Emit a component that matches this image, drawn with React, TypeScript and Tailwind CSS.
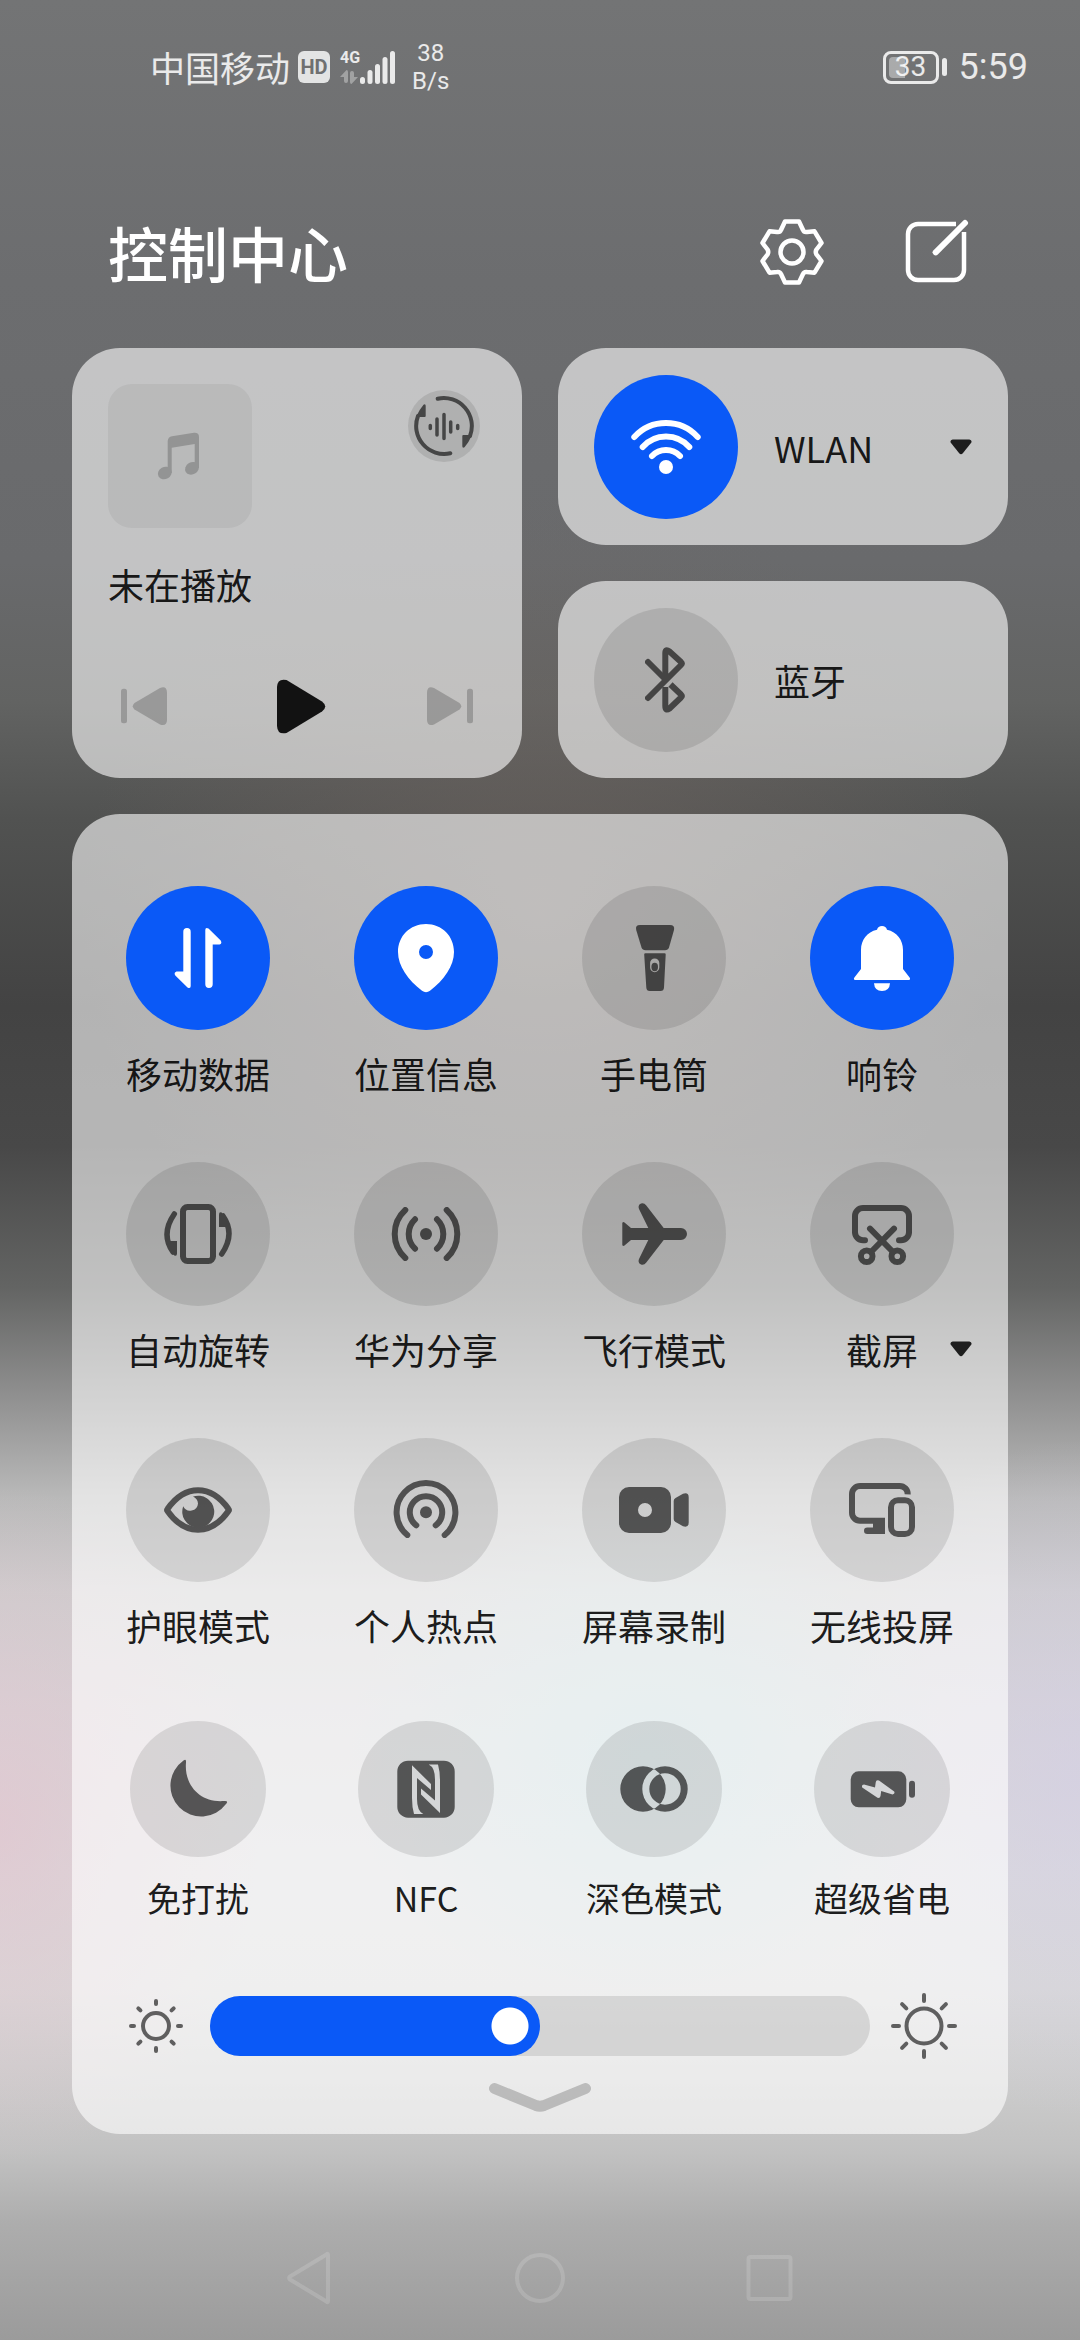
import React, {useState} from 'react'
import clsx from 'clsx'

type Tile = {
  id: string
  label: string
  icon: React.ReactNode
  hasMenu?: boolean
}

const stroke = {
  fill: 'none',
  stroke: 'currentColor',
  strokeWidth: 6,
  strokeLinecap: 'round' as const,
  strokeLinejoin: 'round' as const,
}

// every glyph is drawn on the same 72px board, centered at 36,36
function Icon({children, className}: {children: React.ReactNode; className?: string}) {
  return (
    <svg
      viewBox="0 0 72 72"
      fill="currentColor"
      aria-hidden="true"
      className={clsx('size-[72px] shrink-0', className)}
    >
      {children}
    </svg>
  )
}

const wifi = (
  <Icon>
    <g {...stroke}>
      <path d="M4.3 26a43 43 0 0 1 63.4 0" />
      <path d="M12.7 36a31 31 0 0 1 46.6 0" />
      <path d="M22 45a19.3 19.3 0 0 1 28 0" />
    </g>
    <circle cx="36" cy="56" r="7" />
  </Icon>
)

const bluetooth = (
  <Icon>
    <g {...stroke}>
      <path d="M18 18L35 35" />
      <path d="M18 54L51 21Q52.5 19.5 51 18L39.5 7.5Q35.3 4.5 35.3 9V35" />
      <path
        strokeLinecap="butt"
        d="M35.3 43V62Q35.3 67.5 39.5 64.5L51 53.5Q52.5 52 51 50.5L40.5 40.5"
      />
    </g>
  </Icon>
)

const dataArrow =
  'M21.3 9.7a3.7 3.7 0 0 1 7.4 0V64q0 3-3.2 1.5L13.3 53.5q-1.8-3 1.2-4H21.3z'

const tiles: Tile[] = [
  {
    id: 'data',
    label: '移动数据',
    icon: (
      <Icon>
        <path d={dataArrow} />
        <path d={dataArrow} transform="rotate(180 36 36)" />
      </Icon>
    ),
  },
  {
    id: 'location',
    label: '位置信息',
    icon: (
      <Icon>
        <path
          fillRule="evenodd"
          d="M36 2C20 2 8 14 8 30C8 44 18 58 32 68.8Q36 71.5 40 68.8C54 58 64 44 64 30C64 14 52 2 36 2zM29 30a7 7 0 1 0 14 0a7 7 0 1 0-14 0z"
        />
      </Icon>
    ),
  },
  {
    id: 'torch',
    label: '手电筒',
    icon: (
      <Icon>
        <path d="M22 3H52Q57 3 56 8L51 25.5Q50 28.3 47 28.3H27.5Q24.5 28.3 23.5 25.5L18.2 8Q17 3 22 3z" />
        <path
          fillRule="evenodd"
          d="M27.5 31.3H46.5Q47.8 31.3 47.7 32.6L46 65.5Q45.8 69 42.5 69H31.8Q28.5 69 28.3 65.5L26.2 32.6Q26.1 31.3 27.5 31.3zM32.1 41v4.6a4.6 4.6 0 0 0 9.2 0V41a4.6 4.6 0 0 0-9.2 0z"
        />
        <ellipse cx="36.7" cy="45" rx="3.3" ry="4.2" />
      </Icon>
    ),
  },
  {
    id: 'ring',
    label: '响铃',
    icon: (
      <Icon>
        <path d="M31 7.8a5.2 5.2 0 0 1 10 0C51 10 57 18 57 28V47L63.6 55.5Q65 58 62.5 58H9.5Q7 58 8.4 55.5L15 47V28C15 18 21 10 31 7.8z" />
        <path d="M28 61.3H44Q43.5 69 36 69T28 61.3z" />
      </Icon>
    ),
  },
  {
    id: 'rotate',
    label: '自动旋转',
    icon: (
      <Icon>
        <rect x="21" y="9" width="30" height="54" rx="4.5" {...stroke} />
        <path d="M12.3 16Q-1.6 36 11 54" {...stroke} strokeWidth={5.5} />
        <path d="M8 43H15V55.5Q15 58.5 12.3 57.5L7 50z" />
        <path d="M59.7 56Q73.6 36 61 18" {...stroke} strokeWidth={5.5} />
        <path d="M64 29H57V16.5Q57 13.5 59.7 14.5L65 22z" />
      </Icon>
    ),
  },
  {
    id: 'share',
    label: '华为分享',
    icon: (
      <Icon>
        <circle cx="36" cy="36" r="6" />
        <g {...stroke}>
          <path d="M25 21.3a20.3 20.3 0 0 0 0 29.4" />
          <path d="M15.3 12a32.5 32.5 0 0 0 0 48" />
          <path d="M47 21.3a20.3 20.3 0 0 1 0 29.4" />
          <path d="M56.7 12a32.5 32.5 0 0 1 0 48" />
        </g>
      </Icon>
    ),
  },
  {
    id: 'airplane',
    label: '飞行模式',
    icon: (
      <Icon>
        <path d="M4.3 25Q5 23.5 6.5 24.5L13 30H30.3L21 11Q19.5 7 23 5.5Q26 4.5 28.3 7.5L45.7 30H63a6 6 0 0 1 0 12H45.7L28.3 64.5Q26 67.5 23 66.5Q19.5 65 21 61L30.3 42H13L6.5 47.5Q5 48.5 4.3 47z" />
      </Icon>
    ),
  },
  {
    id: 'screenshot',
    label: '截屏',
    hasMenu: true,
    icon: (
      <Icon>
        <g {...stroke}>
          <path d="M19 42.3H17a8 8 0 0 1-8-8V18a8 8 0 0 1 8-8H55a8 8 0 0 1 8 8V34.3a8 8 0 0 1-8 8H53" />
          <path d="M24 30.7L47 54M48 30.7L25 54" />
          <circle cx="20.7" cy="58.3" r="5.8" />
          <circle cx="51.3" cy="58.3" r="5.8" />
        </g>
      </Icon>
    ),
  },
  {
    id: 'eye',
    label: '护眼模式',
    icon: (
      <Icon>
        <path
          {...stroke}
          d="M5.5 35C14 23 24 16.3 36 16.3S58 23 66.5 35q.8 1 0 2C58 49 48 55.7 36 55.7S14 49 5.5 37q-.8-1 0-2z"
        />
        <path d="M31 22.6A16 16 0 1 1 21.2 32.3A7.8 7.8 0 0 0 36 29.5Q35.5 24.5 31 22.6z" />
      </Icon>
    ),
  },
  {
    id: 'hotspot',
    label: '个人热点',
    icon: (
      <Icon>
        <circle cx="36" cy="38.3" r="6" />
        <g {...stroke}>
          <path d="M17.3 61a29.4 29.4 0 1 1 37.4 0" />
          <path d="M26.3 51.3a16.2 16.2 0 1 1 19.4 0" />
        </g>
      </Icon>
    ),
  },
  {
    id: 'record',
    label: '屏幕录制',
    icon: (
      <Icon>
        <path
          fillRule="evenodd"
          d="M11 13H43a10 10 0 0 1 10 10V49a10 10 0 0 1-10 10H11a10 10 0 0 1-10-10V23a10 10 0 0 1 10-10zM20 36a7 7 0 1 0 14 0a7 7 0 1 0-14 0z"
        />
        <path d="M57.5 24L65 19.8Q70.7 18 70.7 23.5V48.5Q70.7 54 65 52.2L57.5 48Q55.7 47 55.7 45V27Q55.7 25 57.5 24z" />
      </Icon>
    ),
  },
  {
    id: 'cast',
    label: '无线投屏',
    icon: (
      <Icon>
        <path
          {...stroke}
          strokeLinecap="butt"
          d="M61.7 20.3a8 8 0 0 0-8-8.3H14a8 8 0 0 0-8 8V38.7a8 8 0 0 0 8 8H39"
        />
        <path d="M27 46H39V60H21.3a3.3 3.3 0 0 1 0-6.6H27z" />
        <rect x="45" y="26.3" width="21" height="33.7" rx="7" {...stroke} />
      </Icon>
    ),
  },
]

const compactTiles: Tile[] = [
  {
    id: 'dnd',
    label: '免打扰',
    icon: (
      <Icon>
        <path d="M21.5 7.5Q24.5 5.5 24 9.5C22 32 38 50 62 48Q67 47.5 64 51A30.8 30.8 0 1 1 21.5 7.5z" />
      </Icon>
    ),
  },
  {
    id: 'nfc',
    label: 'NFC',
    icon: (
      <Icon>
        <path
          fillRule="evenodd"
          d="M18 7.7H54a10.7 10.7 0 0 1 10.7 10.7V54a10.7 10.7 0 0 1-10.7 10.7H18A10.7 10.7 0 0 1 7.3 54V18.4A10.7 10.7 0 0 1 18 7.7zM22 12.3V45Q22 54 24 61H33.3Q27 58 27 46V25L41 37V31zM50 60.1V27.4Q50 18.4 48 11.4H38.7Q45 14.4 45 26.4V47.4L31 35.4V41.4z"
        />
      </Icon>
    ),
  },
  {
    id: 'dark',
    label: '深色模式',
    icon: (
      <Icon>
        <path
          fillRule="evenodd"
          d="M2.3 36a22.7 22.7 0 1 0 45.4 0a22.7 22.7 0 1 0-45.4 0zM24.3 36a22.7 22.7 0 1 0 45.4 0a22.7 22.7 0 1 0-45.4 0zM31.3 36a15.7 15.7 0 1 0 31.4 0a15.7 15.7 0 1 0-31.4 0z"
        />
      </Icon>
    ),
  },
  {
    id: 'saver',
    label: '超级省电',
    icon: (
      <Icon>
        <path
          fillRule="evenodd"
          d="M12.7 18.3H52.3a8 8 0 0 1 8 8V46.3a8 8 0 0 1-8 8H12.7a8 8 0 0 1-8-8V26.3a8 8 0 0 1 8-8zM18 31.5Q15.2 31.8 16.2 34.6L31.5 44.8Q34 45.5 34.5 43L35.2 38L46.5 41.5Q49.3 41 48.2 38.6L33 27.5Q30 26.5 29.7 29.5L29 34.6z"
        />
        <rect x="63" y="27.7" width="6" height="17" rx="3" />
      </Icon>
    ),
  },
]

function Caret({className}: {className?: string}) {
  return (
    <svg
      viewBox="0 0 22 16"
      aria-hidden="true"
      className={clsx('h-4 w-[22px] text-black/85', className)}
    >
      <path
        fill="currentColor"
        d="M2.6.5H19.4Q22.4 1.2 21.2 3.8L13 14Q11 16.4 9 14L.8 3.8Q-.4 1.2 2.6.5z"
      />
    </svg>
  )
}

function Disc({active, compact, children}: {active: boolean; compact?: boolean; children: React.ReactNode}) {
  return (
    <span
      className={clsx(
        'flex shrink-0 items-center justify-center rounded-full',
        compact ? 'size-[136px]' : 'size-36',
        active ? 'bg-[#0a59f7] text-white' : 'bg-black/10 text-black',
      )}
    >
      <span className={active ? '' : 'opacity-60'}>{children}</span>
    </span>
  )
}

function StatusBar() {
  return (
    <header className="flex h-[134px] items-center justify-between pl-[150px] pr-[52px] text-white/85">
      <div className="flex items-center">
        <span className="text-[35px] leading-10">中国移动</span>
        <span className="ml-2 flex size-8 items-center justify-center rounded-md bg-[#e3e4e4] font-['Roboto',sans-serif] text-xl font-bold text-[#6f7071]">
          HD
        </span>
        <div className="ml-[10px] flex items-end font-['Roboto',sans-serif]">
          <div className="flex flex-col items-start">
            <span className="text-base leading-4 font-bold">4G</span>
            <svg viewBox="0 0 18 14" className="mt-1 h-[14px] w-[18px] opacity-40" fill="currentColor">
              <path d="M0 7L6.5 0Q8 0 8 2V11a2 2 0 0 1-4 0V7zM18 7L11.5 14Q10 14 10 12V3a2 2 0 0 1 4 0V7z" />
            </svg>
          </div>
          <svg viewBox="0 0 36 34" className="h-[34px] w-9" fill="currentColor">
            <rect x="0" y="27" width="5" height="7" rx="2.5" />
            <rect x="7.5" y="20" width="5" height="14" rx="2.5" />
            <rect x="15" y="14" width="5" height="20" rx="2.5" />
            <rect x="22.5" y="7" width="5" height="27" rx="2.5" />
            <rect x="30" y="1" width="5" height="33" rx="2.5" />
          </svg>
        </div>
        <div className="ml-4 text-center font-['Roboto',sans-serif] text-2xl leading-7">
          <div>38</div>
          <div>B/s</div>
        </div>
      </div>
      <div className="flex items-center font-['Roboto',sans-serif]">
        <div className="relative flex h-[33px] w-14 items-center justify-center rounded-lg border-3 border-white/85">
          <div className="absolute inset-y-[3px] left-[3px] w-4 rounded-l-sm bg-white/40" />
          <span className="relative text-[28px] leading-7">33</span>
        </div>
        <div className="ml-[3px] h-[18px] w-[5px] rounded-full bg-white/85" />
        <time className="ml-3 text-4xl">5:59</time>
      </div>
    </header>
  )
}

function MediaCard() {
  return (
    <section className="flex flex-col justify-between rounded-[48px] bg-white/60 p-9">
      <div className="flex items-start justify-between">
        <div className="flex size-36 items-center justify-center rounded-3xl bg-black/5">
          <Icon className="opacity-20">
            <path d="M23.7 53V21Q24 17 28 16.3L50 12.8Q55 12.5 55 17V48H50.7V24L27.7 27.7V53z" />
            <ellipse cx="20.8" cy="53" rx="7.2" ry="6" transform="rotate(-30 20.8 53)" />
            <ellipse cx="48" cy="48.3" rx="7.2" ry="6" transform="rotate(-30 48 48.3)" />
          </Icon>
        </div>
        <button aria-label="音频输出" className="mt-[6px] mr-[6px] rounded-full bg-black/10">
          <Icon className="opacity-60">
            <g {...stroke} strokeWidth={4}>
              <path d="M29.7 8.7A28 28 0 0 1 62 46" />
              <path d="M42.3 63.3A28 28 0 0 1 10 26" />
            </g>
            <path d="M54.3 46q0-1 1-1H64Q61 52 56.5 57.3Q54.3 58.5 54.3 56z" />
            <path d="M17.7 26q0 1-1 1H8Q11 20 15.5 14.7Q17.7 13.5 17.7 16z" />
            <g {...stroke} strokeWidth={3.5}>
              <path d="M22.3 35.5v3M29 29v16M36 24.5v24M42.7 32v10M49.7 35.5v3" />
            </g>
          </Icon>
        </button>
      </div>
      <p className="mt-8 text-4xl leading-[48px] text-black/90">未在播放</p>
      <div className="mt-auto flex justify-between">
        <button aria-label="上一首" disabled>
          <Icon className="opacity-20">
            <rect x="13" y="18.7" width="6" height="34.6" rx="2.5" />
            <path d="M26.5 33L52 18Q58.7 15.5 59 22.5V50Q58.7 56.8 52 54.5L26.5 39.5Q23 36.3 26.5 33z" />
          </Icon>
        </button>
        <button aria-label="播放">
          <Icon className="opacity-90">
            <path d="M16 17Q16.4 8 25.5 10L61 31.5Q67.5 36.5 61 41.5L25.5 63Q16.4 65 16 56z" />
          </Icon>
        </button>
        <button aria-label="下一首" disabled>
          <Icon className="opacity-20">
            <rect x="53" y="18.7" width="6" height="34.6" rx="2.5" />
            <path d="M45.5 33L20 18Q13.3 15.5 13 22.5V50Q13.3 56.8 20 54.5L45.5 39.5Q49 36.3 45.5 33z" />
          </Icon>
        </button>
      </div>
    </section>
  )
}

function Sun({ray, r}: {ray: [number, number]; r: number}) {
  return (
    <svg viewBox="-33 -33 66 66" aria-hidden="true" className="size-[66px] shrink-0 text-black/60">
      <g fill="none" stroke="currentColor" strokeWidth="4" strokeLinecap="round">
        <circle r={r} />
        {[0, 45, 90, 135, 180, 225, 270, 315].map((deg) => (
          <path key={deg} d={`M0 ${-ray[0]}V${-ray[1]}`} transform={`rotate(${deg})`} />
        ))}
      </g>
    </svg>
  )
}

function Brightness() {
  const [value, setValue] = useState(45)
  const edge = `calc(30px + (100% - 60px) * ${value / 100})`

  return (
    <div className="mt-[71px] flex items-center gap-[21px] px-[39px]">
      <Sun r={13} ray={[22, 25]} />
      <input
        type="range"
        min={0}
        max={100}
        value={value}
        aria-label="亮度"
        onChange={(e) => setValue(Number(e.target.value))}
        style={{backgroundImage: `linear-gradient(to right, #0a59f7 ${edge}, transparent ${edge})`}}
        className="h-[60px] min-w-0 flex-1 appearance-none rounded-full bg-black/10 [&::-webkit-slider-thumb]:size-[60px] [&::-webkit-slider-thumb]:appearance-none [&::-webkit-slider-thumb]:rounded-full [&::-webkit-slider-thumb]:bg-[radial-gradient(circle,#fff_18px,#0a59f7_19px)]"
      />
      <Sun r={17.5} ray={[25, 31]} />
    </div>
  )
}

export default function ControlCenter() {
  const [active, setActive] = useState<string[]>(['wlan', 'data', 'location', 'ring'])

  function toggle(id: string) {
    setActive((ids) => (ids.includes(id) ? ids.filter((i) => i !== id) : [...ids, id]))
  }

  function renderTile({id, label, icon, hasMenu}: Tile, compact?: boolean) {
    const on = active.includes(id)
    return (
      <button
        key={id}
        onClick={() => toggle(id)}
        aria-pressed={on}
        className={clsx(
          'relative flex flex-col items-center text-black/90',
          compact ? 'gap-[17px] text-[34px]' : 'gap-[19px] text-4xl',
        )}
      >
        <Disc active={on} compact={compact}>
          {icon}
        </Disc>
        <span className="leading-[48px]">{label}</span>
        {hasMenu && <Caret className="absolute right-6 bottom-4" />}
      </button>
    )
  }

  return (
    <div className="flex min-h-screen flex-col bg-[radial-gradient(ellipse_260px_340px_at_0%_78%,rgba(226,196,206,0.7),transparent),radial-gradient(ellipse_260px_340px_at_100%_76%,rgba(212,206,230,0.6),transparent),radial-gradient(ellipse_300px_260px_at_60%_75%,rgba(190,218,220,0.8),transparent),radial-gradient(ellipse_460px_420px_at_50%_39%,rgba(112,102,97,0.6),transparent),linear-gradient(to_bottom,#737475_0%,#6c6d6f_12%,#696a6c_24%,#626362_30%,#515251_35%,#434343_43%,#484848_49%,#636463_55%,#939393_60%,#b9b9b9_64%,#cdcccd_68%,#d5d3d6_73%,#dadadc_80%,#d8d8d8_85%,#cccccc_89%,#c1c1c1_92%,#adadad_95%,#9b9b9b_100%)] font-['Noto_Sans_CJK_SC',sans-serif]">
      <StatusBar />

      <main className="px-[72px]">
        <div className="flex items-center gap-[72px] px-9 pt-[82px] pb-[60px] text-white">
          <h1 className="flex-1 text-6xl leading-[72px] font-medium">控制中心</h1>
          <button aria-label="设置">
            <Icon>
              <g {...stroke} strokeWidth={4.5}>
                <path d="M29 5.5H43L47 14Q48 16.5 51 16L58.5 15.3L65.5 27L60.5 33.5Q59 36 60.5 38.5L65.5 45L58.5 56.7L51 56Q48 55.5 47 58L43 66.5H29L25 58Q24 55.5 21 56L13.5 56.7L6.5 45L11.5 38.5Q13 36 11.5 33.5L6.5 27L13.5 15.3L21 16Q24 16.5 25 14z" />
                <circle cx="36" cy="36" r="11.5" />
              </g>
            </Icon>
          </button>
          <button aria-label="编辑">
            <Icon>
              <path
                {...stroke}
                strokeWidth={4.5}
                strokeLinecap="butt"
                d="M56 8H18A10 10 0 0 0 8 18V54A10 10 0 0 0 18 64H54A10 10 0 0 0 64 54V16"
              />
              <path {...stroke} d="M35.7 36.3L65 7" />
            </Icon>
          </button>
        </div>

        <div className="grid grid-cols-2 gap-9">
          <MediaCard />
          <div className="flex flex-col gap-9">
            {[
              {id: 'wlan', label: 'WLAN', icon: wifi, hasMenu: true},
              {id: 'bluetooth', label: '蓝牙', icon: bluetooth, hasMenu: false},
            ].map(({id, label, icon, hasMenu}) => (
              <button
                key={id}
                onClick={() => toggle(id)}
                aria-pressed={active.includes(id)}
                className="flex h-[197px] items-center gap-9 rounded-[48px] bg-white/60 px-9 text-left text-4xl text-black/90"
              >
                <Disc active={active.includes(id)}>{icon}</Disc>
                <span className="flex-1">{label}</span>
                {hasMenu && <Caret />}
              </button>
            ))}
          </div>
        </div>

        <section className="mt-9 flex flex-col rounded-[48px] bg-white/60 px-3 pt-[72px] pb-[22px]">
          <div className="grid grid-cols-4 gap-y-[65px]">
            {tiles.map((tile) => renderTile(tile))}
          </div>
          <div className="mt-[72px] grid grid-cols-4">
            {compactTiles.map((tile) => renderTile(tile, true))}
          </div>
          <Brightness />
          <button aria-label="收起" className="mx-auto mt-6">
            <svg viewBox="0 0 102 29" className="h-[29px] w-[102px] text-black/20">
              <path
                d="M5.5 5.5L47 22.5Q51 24 55 22.5L96.5 5.5"
                fill="none"
                stroke="currentColor"
                strokeWidth="11"
                strokeLinecap="round"
                strokeLinejoin="round"
              />
            </svg>
          </button>
        </section>
      </main>

      <nav className="mt-[108px] mb-[25px] flex justify-center text-white/15">
        <button aria-label="返回" className="flex w-[230px] justify-center">
          <Icon>
            <path {...stroke} strokeWidth={4} d="M54 13V59Q54 61 52.5 59.5L16 37.5Q14.5 36 16 34.5L52.5 12.5Q54 11 54 13z" />
          </Icon>
        </button>
        <button aria-label="主页" className="flex w-[230px] justify-center">
          <Icon>
            <circle {...stroke} strokeWidth={4} cx="36" cy="36" r="23" />
          </Icon>
        </button>
        <button aria-label="最近任务" className="flex w-[230px] justify-center">
          <Icon>
            <rect {...stroke} strokeWidth={4} x="14.5" y="15" width="42" height="42" rx="2" />
          </Icon>
        </button>
      </nav>
    </div>
  )
}
